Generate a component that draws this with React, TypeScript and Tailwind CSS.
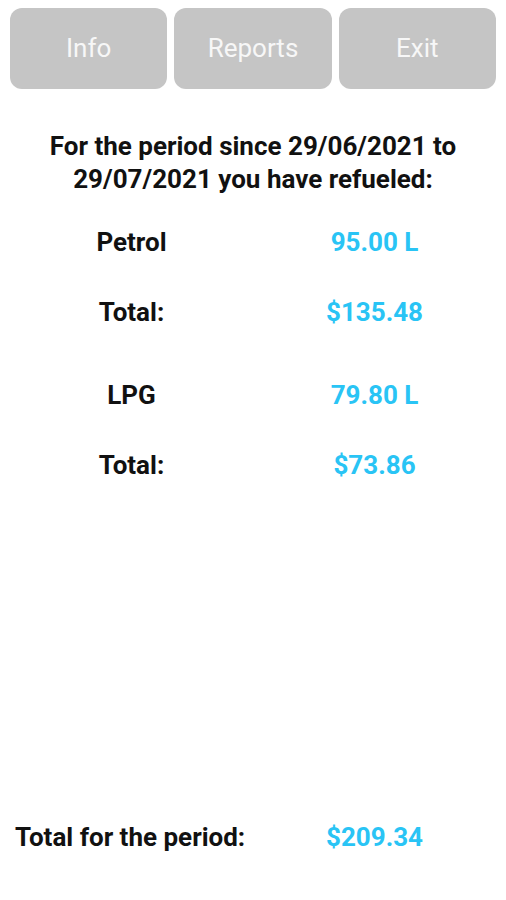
import React from "react";

const font = { fontFamily: "Roboto, 'Noto Sans', sans-serif" };

function Row({ label, value, className = "" }: { label: string; value: string; className?: string }) {
  return (
    <div className={`grid grid-cols-2 px-[10px] h-[40px] items-center ${className}`}>
      <div className="text-center text-[26px] font-bold text-[#111]">{label}</div>
      <div className="text-center text-[26px] font-bold text-[#29c4f5]">{value}</div>
    </div>
  );
}

export default function App() {
  return (
    <div className="w-[506px] h-[900px] bg-white flex flex-col" style={font}>
      <div className="flex gap-[7px] pl-[10px] pr-[10px] pt-[8px]">
        {["Info", "Reports", "Exit"].map((t) => (
          <div
            key={t}
            className="flex-1 h-[81px] rounded-[12px] bg-[#c5c5c5] flex items-center justify-center text-[#f7f7f7] text-[26px]"
          >
            {t}
          </div>
        ))}
      </div>
      <div className="mt-[41px] text-center text-[26px] leading-[33px] font-bold text-[#111] px-[20px] whitespace-nowrap">
        For the period since 29/06/2021 to
        <br />
        29/07/2021 you have refueled:
      </div>
      <Row label="Petrol" value="95.00 L" className="mt-[26px]" />
      <Row label="Total:" value="$135.48" className="mt-[30px]" />
      <Row label="LPG" value="79.80 L" className="mt-[43px]" />
      <Row label="Total:" value="$73.86" className="mt-[30px]" />
      <div className="mt-auto mb-[43px] grid grid-cols-2 px-[10px] h-[40px] items-center">
        <div className="pl-[5px] text-[26px] font-bold text-[#111] whitespace-nowrap">Total for the period:</div>
        <div className="text-center text-[26px] font-bold text-[#29c4f5]">$209.34</div>
      </div>
    </div>
  );
}
